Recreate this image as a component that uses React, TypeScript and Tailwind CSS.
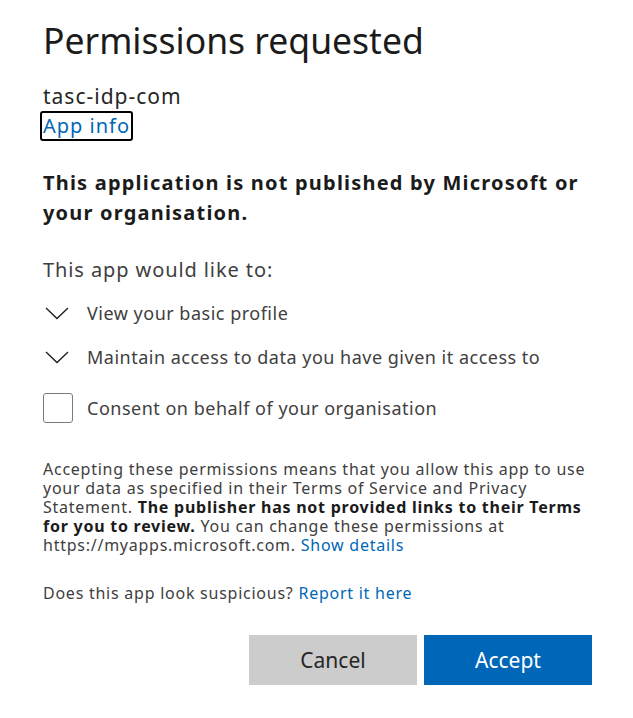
const font = { fontFamily: '"Noto Sans", "Open Sans", sans-serif' }

function Chevron() {
  return (
    <svg width="24" height="14" viewBox="0 0 24 14" fill="none" className="shrink-0">
      <polyline points="1,2 12,12.5 23,2" stroke="#1b1b1b" strokeWidth="1.3" />
    </svg>
  )
}

function ScopeRow({ label }: { label: string }) {
  return (
    <div className="flex h-[30px] items-center gap-[18px] pl-[2px]">
      <Chevron />
      <span className="text-[18px] tracking-[0.5px] text-[#404040]">{label}</span>
    </div>
  )
}

export default function App() {
  return (
    <div className="min-h-[718px] w-[633px] bg-white text-[#1b1b1b]" style={font}>
      <div className="flex flex-col px-[43px] pt-[14px]">
        <h1 className="text-[35.5px] leading-[52px] font-normal text-[#1b1b1b]">Permissions requested</h1>

        <div className="mt-[17px] text-[21px] leading-[26px] tracking-[1px] text-[#262626]">tasc-idp-com</div>
        <div className="mt-[2px] -ml-[3px]">
          <a
            href="#"
            className="inline-block rounded-[3px] border-2 border-black px-[1px] text-[20px] leading-[26px] tracking-[1px] text-[#0067b8]"
          >
            App info
          </a>
        </div>

        <p className="mt-[27px] w-[570px] text-[20px] leading-[30px] font-bold tracking-[1.2px] text-[#1b1b1b]">
          This application is not published by Microsoft or
          <br />
          your organisation.
        </p>

        <div className="mt-[28px] text-[20px] leading-[28px] tracking-[0.9px] text-[#404040]">
          This app would like to:
        </div>

        <div className="mt-[14px] flex flex-col">
          <ScopeRow label="View your basic profile" />
          <div className="mt-[14px]">
            <ScopeRow label="Maintain access to data you have given it access to" />
          </div>
          <div className="mt-[21px] flex h-[30px] items-center gap-[14px]">
            <div className="h-[30px] w-[30px] shrink-0 rounded-[3px] border border-[#7a7a7a]" />
            <span className="text-[18px] tracking-[0.5px] text-[#404040]">Consent on behalf of your organisation</span>
          </div>
        </div>

        <p className="mt-[37px] w-[570px] text-[16px] leading-[19px] tracking-[0.75px] text-[#404040]">
          Accepting these permissions means that you allow this app to use
          <br />
          your data as specified in their Terms of Service and Privacy
          <br />
          Statement. <span className="font-bold text-[#1b1b1b]">The publisher has not provided links to their Terms</span>
          <br />
          <span className="font-bold text-[#1b1b1b]">for you to review.</span> You can change these permissions at
          <br />
          https://myapps.microsoft.com.{' '}
          <a href="#" className="text-[#0067b8]">
            Show details
          </a>
        </p>

        <p className="mt-[29px] text-[16px] leading-[19px] tracking-[0.75px] text-[#404040]">
          Does this app look suspicious?{' '}
          <a href="#" className="text-[#0067b8]">
            Report it here
          </a>
        </p>

        <div className="mt-[32px] -mr-[2px] flex justify-end gap-[7px]">
          <button type="button" className="h-[50px] w-[168px] bg-[#cccccc] pt-[2px] text-[21px] text-[#262626]">
            Cancel
          </button>
          <button type="button" className="h-[50px] w-[168px] bg-[#0067b8] pt-[2px] text-[21px] text-white">
            Accept
          </button>
        </div>
      </div>
    </div>
  )
}
